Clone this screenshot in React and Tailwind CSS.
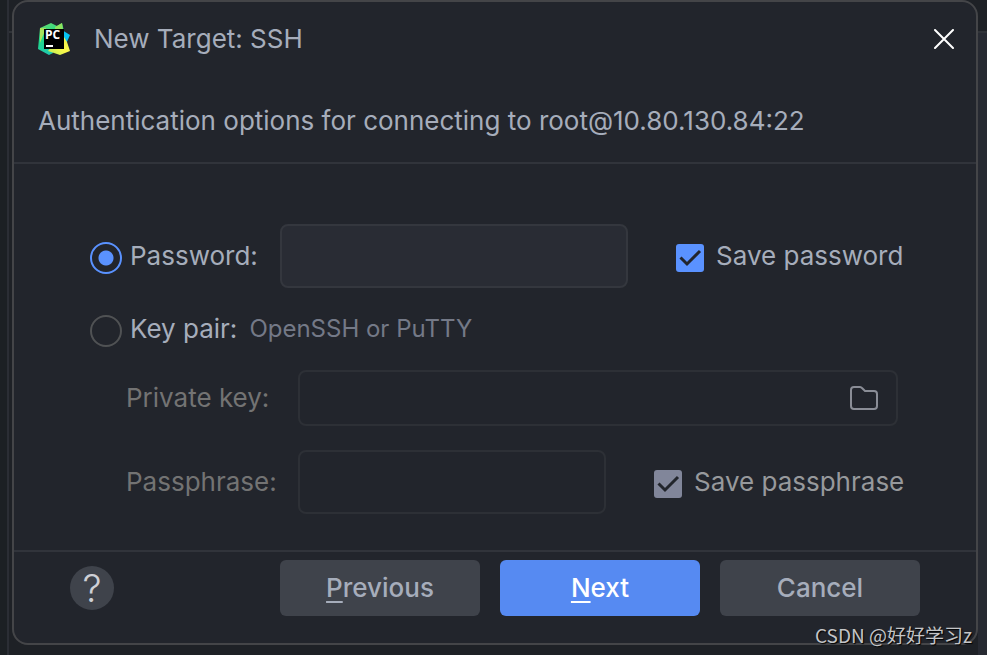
import React, { useState } from 'react';

const PyCharmLogo = () => (
  <svg width="32" height="32" viewBox="0 0 32 32" aria-hidden="true">
    <defs>
      <linearGradient id="pc-green" x1="0" y1="0" x2="0.4" y2="1">
        <stop offset="0" stopColor="#6fdc68" />
        <stop offset="0.5" stopColor="#21d789" />
        <stop offset="1" stopColor="#1fc8b0" />
      </linearGradient>
      <linearGradient id="pc-yellow" x1="0" y1="1" x2="1" y2="0">
        <stop offset="0" stopColor="#b4ee55" />
        <stop offset="0.5" stopColor="#fcf84a" />
        <stop offset="1" stopColor="#e9ee50" />
      </linearGradient>
    </defs>
    <path d="M24 7l8 5-4 9-5-3z" fill="#07c3f2" />
    <path d="M2 5l11-5 6 3 5-3 2 8-12 16 1 6-4 2L0 26z" fill="url(#pc-green)" />
    <path d="M2 5l6 0L2 20z" fill="#a8e35c" />
    <path d="M17 4l7-4 1 7h-8z" fill="#8ee35e" />
    <path d="M26 14l3 5 3 9-10 4-12-4 3-4h12z" fill="url(#pc-yellow)" />
    <rect x="6" y="6" width="20" height="20" fill="#000" />
    <text x="7" y="16" fontSize="12" fontWeight="700" fontFamily="'Open Sans', sans-serif" fill="#fff">
      PC
    </text>
    <rect x="8" y="22" width="7" height="2" fill="#fff" />
  </svg>
);

const RadioOption = ({ id, value, selected, onSelect, children }) => (
  <div className="flex items-center gap-2">
    <input
      id={id}
      type="radio"
      name="auth"
      value={value}
      checked={selected === value}
      onChange={() => onSelect(value)}
      className="mt-1 size-8 shrink-0 appearance-none rounded-full border-2 border-[#505254] checked:border-[#5a92ff] checked:bg-[radial-gradient(circle,#5a92ff_7px,transparent_8px)]"
    />
    <label htmlFor={id} className="whitespace-nowrap">
      {children}
    </label>
  </div>
);

const CheckOption = ({ id, checked, onChange, disabled, children }) => (
  <div className="flex items-center gap-3">
    <span className="mt-1 grid size-7 shrink-0">
      <input
        id={id}
        type="checkbox"
        checked={checked}
        disabled={disabled}
        onChange={(e) => onChange(e.target.checked)}
        className="col-start-1 row-start-1 size-7 appearance-none rounded-[3px] border-2 border-[#505254] checked:border-0 checked:bg-[#5a92ff] disabled:checked:bg-[#81869a]"
      />
      {checked && (
        <svg
          viewBox="0 0 28 28"
          className="pointer-events-none col-start-1 row-start-1 size-7"
          fill="none"
          stroke="#22252c"
          strokeWidth="3"
        >
          <path d="M4.5 13.5l6.5 6.5L24 7" />
        </svg>
      )}
    </span>
    <label htmlFor={id} className="whitespace-nowrap">
      {children}
    </label>
  </div>
);

const App = () => {
  const [auth, setAuth] = useState('password');
  const [savePassword, setSavePassword] = useState(true);
  const [savePassphrase, setSavePassphrase] = useState(true);

  const keyDisabled = auth !== 'keypair';

  return (
    <div className="relative flex min-h-screen bg-[#1e2126] font-['Inter','Noto_Sans_CJK_SC',sans-serif] text-[26px] leading-8 text-[#a6adbb]">
      {/* edges of the window behind the dialog */}
      <div className="w-[9px] shrink-0 border-r-2 border-[#2b2e35] bg-[#1c2024]" />
      <div className="w-[3px] shrink-0">
        <div className="h-[33px] border-b-2 border-[#303338]" />
      </div>

      <main className="mb-[10px] flex min-w-0 flex-1 flex-col rounded-2xl border-2 border-[#444548] bg-[#22252c]">
        <header className="border-b-2 border-[#31343b]">
          <div className="flex h-[74px] items-center gap-6 pr-[22px] pl-6">
            <PyCharmLogo />
            <h1 className="flex-1">New Target: SSH</h1>
            <button type="button" aria-label="Close">
              <svg width="20" height="20" viewBox="0 0 20 20" stroke="#fff" strokeWidth="2" strokeLinecap="round">
                <path d="M1 1l18 18M19 1L1 19" />
              </svg>
            </button>
          </div>
          <p className="flex h-[86px] items-center px-6 pt-1">
            Authentication options for connecting to root@10.80.130.84:22
          </p>
        </header>

        <form className="flex-1 pt-[60px] pr-[70px] pb-9 pl-[76px]">
          <div className="flex items-center">
            <div className="w-[190px] shrink-0">
              <RadioOption id="auth-password" value="password" selected={auth} onSelect={setAuth}>
                Password:
              </RadioOption>
            </div>
            <input
              type="password"
              aria-label="Password"
              className="h-16 min-w-0 flex-1 rounded-lg border-2 border-[#34373e] bg-[#292c34] px-3 outline-none"
            />
            <div className="ml-12 w-[230px] shrink-0">
              <CheckOption id="save-password" checked={savePassword} onChange={setSavePassword}>
                Save password
              </CheckOption>
            </div>
          </div>

          <div className="flex h-[82px] items-center gap-3">
            <RadioOption id="auth-keypair" value="keypair" selected={auth} onSelect={setAuth}>
              Key pair:
            </RadioOption>
            <span className="text-2xl text-[#747987]">OpenSSH or PuTTY</span>
          </div>

          <div className="flex items-center pr-2 pl-9">
            <label htmlFor="private-key" className="w-[172px] shrink-0 text-[#737373]">
              Private key:
            </label>
            <div className="flex h-14 min-w-0 flex-1 items-center rounded-lg border-2 border-[#2d3036] pr-[18px]">
              <input
                id="private-key"
                type="text"
                disabled={keyDisabled}
                className="h-full min-w-0 flex-1 px-3 outline-none"
              />
              <button type="button" aria-label="Browse" disabled={keyDisabled}>
                <svg width="28" height="24" viewBox="0 0 28 24" fill="none" stroke="#8a8d96" strokeWidth="2">
                  <path d="M1 4a3 3 0 0 1 3-3h6a3 3 0 0 1 2 1l3 3h9a3 3 0 0 1 3 3v12a3 3 0 0 1-3 3H4a3 3 0 0 1-3-3z" />
                </svg>
              </button>
            </div>
          </div>

          <div className="mt-6 flex items-center pl-9">
            <label htmlFor="passphrase" className="w-[172px] shrink-0 text-[#737373]">
              Passphrase:
            </label>
            <input
              id="passphrase"
              type="password"
              disabled={keyDisabled}
              className="h-16 min-w-0 flex-1 rounded-lg border-2 border-[#2d3036] px-3 outline-none"
            />
            <div className="ml-12 w-[252px] shrink-0 text-[#97999c]">
              <CheckOption
                id="save-passphrase"
                checked={savePassphrase}
                onChange={setSavePassphrase}
                disabled={keyDisabled}
              >
                Save passphrase
              </CheckOption>
            </div>
          </div>
        </form>

        <footer className="flex items-center justify-between border-t-2 border-[#31343b] pt-2 pr-14 pb-[27px] pl-14">
          <button
            type="button"
            aria-label="Help"
            className="flex size-11 items-center justify-center rounded-full bg-[#3f434b] text-[38px] font-light text-[#ced0d6]"
          >
            ?
          </button>
          <div className="flex gap-5 font-medium">
            <button type="button" className="h-14 w-[200px] rounded-md bg-[#3f434b]">
              <span className="underline decoration-2 underline-offset-4">P</span>revious
            </button>
            <button type="button" className="h-14 w-[200px] rounded-md bg-[#568af2] text-white">
              <span className="underline decoration-2 underline-offset-4">N</span>ext
            </button>
            <button type="button" className="h-14 w-[200px] rounded-md bg-[#3f434b]">
              Cancel
            </button>
          </div>
        </footer>
      </main>

      <div className="flex w-[9px] shrink-0 flex-col">
        <div className="h-[33px] border-b-2 border-[#303338]" />
        <div className="flex-1 bg-[#272a32]" />
      </div>

      <div className="absolute right-[15px] bottom-2 font-['Noto_Sans_CJK_SC',sans-serif] text-[19px] leading-6 text-[#c4c5c7] [text-shadow:1px_1px_1px_#000]">
        CSDN @好好学习z
      </div>
    </div>
  );
};

export default App;
